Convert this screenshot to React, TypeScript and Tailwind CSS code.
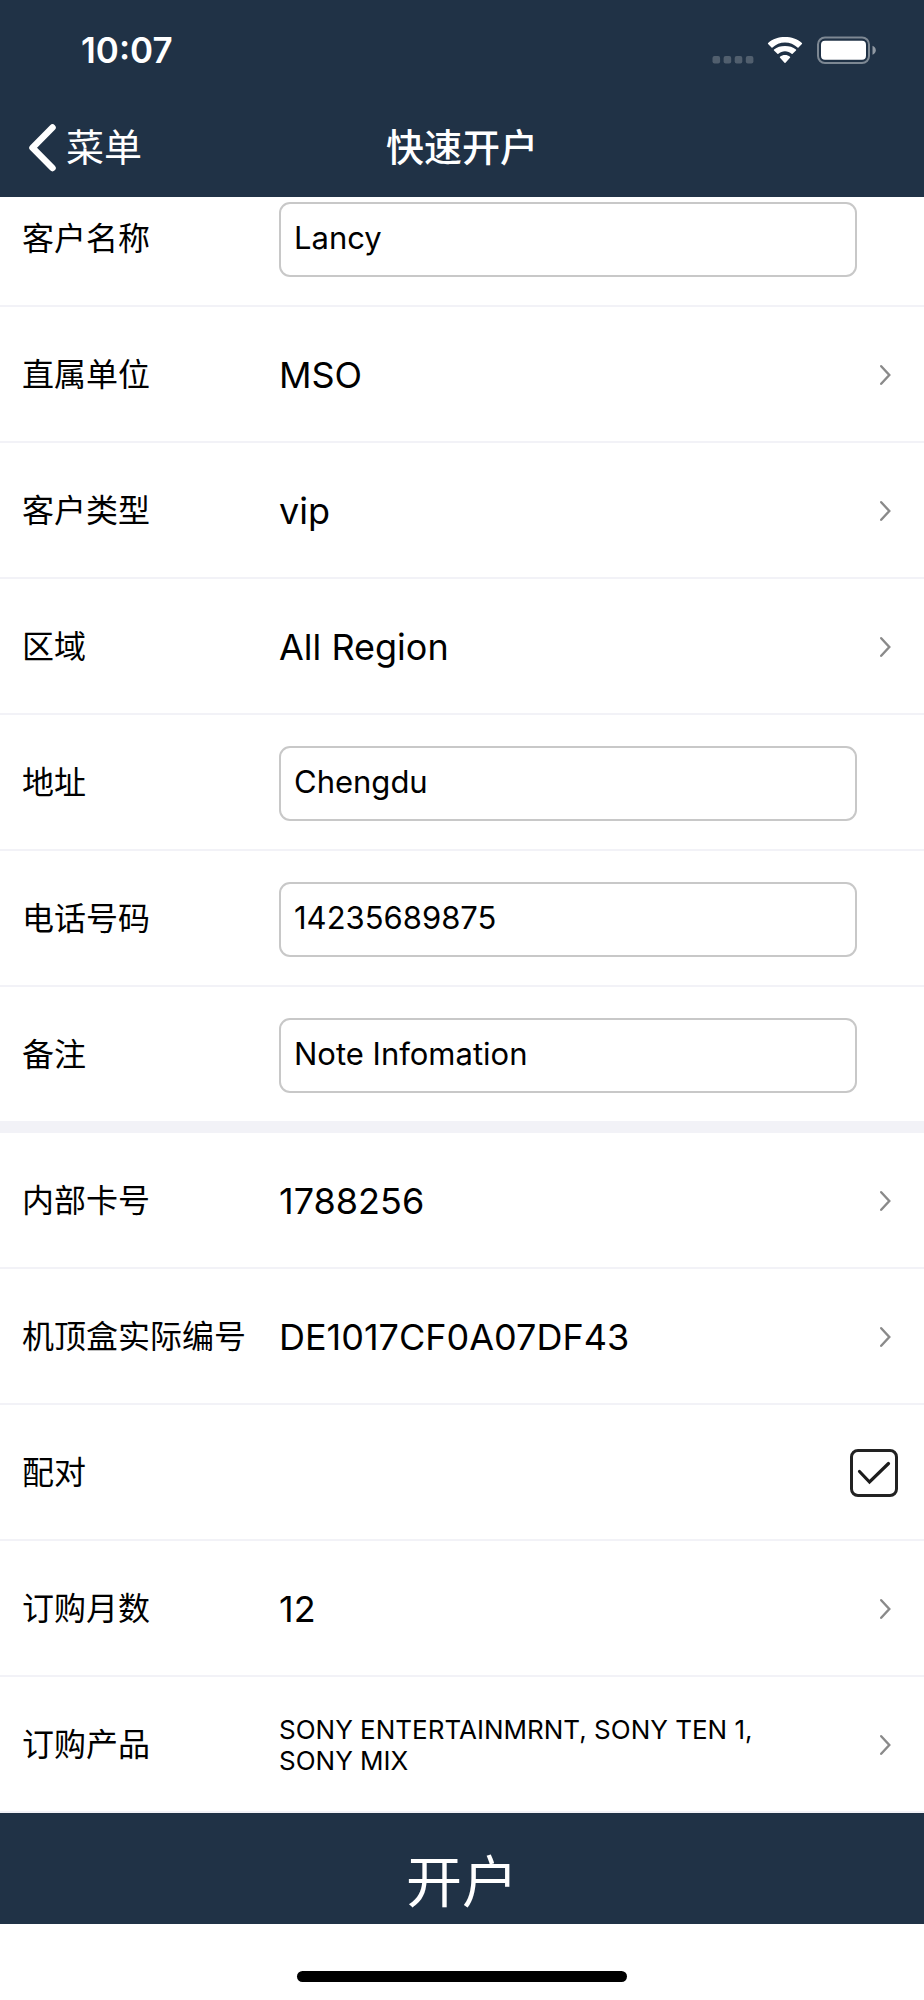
import { useLayoutEffect, useRef, useState } from "react";
import type { ReactNode } from "react";

const labelClass = "w-[257px] shrink-0 text-[32px] leading-[44px] text-left whitespace-nowrap";

function StatusIcons() {
  return (
    <svg width="164" height="28" viewBox="0 0 164 28" fill="none" aria-hidden="true">
      {/* No signal */}
      <g fill="#fff" fillOpacity="0.22">
        <rect x="0.5" y="20" width="7.6" height="7.6" rx="2" />
        <rect x="11.6" y="20" width="7.6" height="7.6" rx="2" />
        <rect x="22.7" y="20" width="7.6" height="7.6" rx="2" />
        <rect x="33.8" y="20" width="7.6" height="7.6" rx="2" />
      </g>
      {/* Wifi */}
      <g transform="translate(55 1)" fill="#fff">
        <path d="M18 5.4c4.8 0 9.2 1.9 12.5 5.1.3.3.7.3 1 0l3.4-3.4c.3-.3.3-.7 0-1C30.3 1.8 24.4 0 18 0S5.7 1.8 1.1 6.1c-.3.3-.3.7 0 1l3.4 3.4c.3.3.7.3 1 0C8.8 7.3 13.2 5.4 18 5.4z" />
        <path d="M18 14.2c2.5 0 4.8.9 6.6 2.5.3.3.7.3 1 0l3.4-3.200c.3-.3.3-.8 0-1.1C26 9.9 22.2 8.900 18 8.900s-8 1-11 3.500c-.3.3-.3.8 0 1.1l3.4 3.200c.3.3.7.3 1 0 1.8-1.6 4.1-2.500 6.600-2.500z" />
        <path d="M23 20.700c.3-.3.3-.7 0-1-1.4-1.1-3.1-1.700-5-1.700s-3.600.6-5 1.700c-.3.3-.3.7 0 1l4.500 5c.3.3.7.3 1 0z" />
      </g>
      {/* Battery */}
      <rect x="106" y="1.5" width="51" height="25.5" rx="7" stroke="#fff" strokeOpacity="0.42" strokeWidth="2" />
      <rect x="109" y="4.800" width="45" height="19" rx="4" fill="#fff" />
      <path d="M160.500 9.800c2 .8 3.300 2.500 3.300 4.500s-1.300 3.700-3.300 4.500z" fill="#fff" fillOpacity="0.5" />
    </svg>
  );
}

function Row({ children }: { children: ReactNode }) {
  return (
    <div className="flex h-[136px] w-full shrink-0 items-center border-b-2 border-[#f2f2f7] bg-white pl-[22px] pr-[26px] pt-[2px]">
      {children}
    </div>
  );
}

function InputRow({ id, label, defaultValue, type = "text" }: { id: string; label: string; defaultValue: string; type?: string }) {
  return (
    <Row>
      <label htmlFor={id} className={labelClass}>
        {label}
      </label>
      <input
        id={id}
        type={type}
        defaultValue={defaultValue}
        className="mr-[41px] h-[75px] min-w-0 flex-1 rounded-[11px] border-2 border-[#c8c8c8] bg-white px-[13px] pb-1 text-[31px] text-black outline-none"
      />
    </Row>
  );
}

function PickerRow({ label, value, small = false }: { label: string; value: string; small?: boolean }) {
  return (
    <button type="button" className="block w-full">
      <Row>
        <span className={labelClass}>{label}</span>
        <span className={`min-w-0 flex-1 pr-20 text-left ${small ? "text-[26px] leading-[31px]" : "text-[36px] leading-[44px]"}`}>
          {value}
        </span>
        <svg width="24" height="24" viewBox="0 0 24 24" fill="none" stroke="#8a8a8a" strokeWidth="2.4" strokeLinecap="round" aria-hidden="true">
          <path d="M7.200 3.200 15.300 12l-8.100 8.800" />
        </svg>
      </Row>
    </button>
  );
}

export default function App() {
  const listRef = useRef<HTMLElement>(null);
  const [paired, setPaired] = useState(true);

  // Start at the end of the form
  useLayoutEffect(() => {
    if (listRef.current) listRef.current.scrollTop = listRef.current.scrollHeight;
  }, []);

  return (
    <div className="flex h-screen flex-col bg-white font-['Inter','Noto_Sans_CJK_SC',sans-serif] text-black">
      <header className="shrink-0 bg-[#203246] text-white">
        <div className="flex h-[100px] items-center justify-between pl-[81px] pr-12">
          <span className="text-[35px] font-semibold leading-[44px]">10:07</span>
          <StatusIcons />
        </div>
        <div className="grid h-[97px] grid-cols-3 items-center px-6 pb-1">
          <button type="button" className="flex items-center gap-1 text-left text-[38px] leading-[44px]">
            <svg width="38" height="50" viewBox="0 0 38 50" fill="none" stroke="#fff" strokeWidth="6.5" strokeLinecap="round" strokeLinejoin="round" aria-hidden="true">
              <path d="M28.5 5.500 8.500 25.800 28.500 46" />
            </svg>
            菜单
          </button>
          <h1 className="text-center text-[38px] font-medium leading-[44px]">快速开户</h1>
        </div>
      </header>

      <main ref={listRef} className="min-h-0 flex-1 overflow-y-auto [scrollbar-width:none]">
        <section>
          <InputRow id="name" label="客户名称" defaultValue="Lancy" />
          <PickerRow label="直属单位" value="MSO" />
          <PickerRow label="客户类型" value="vip" />
          <PickerRow label="区域" value="All Region" />
          <InputRow id="address" label="地址" defaultValue="Chengdu" />
          <InputRow id="phone" label="电话号码" defaultValue="14235689875" type="tel" />
          <InputRow id="note" label="备注" defaultValue="Note Infomation" />
        </section>

        <section className="border-t-[10px] border-[#f2f2f7]">
          <PickerRow label="内部卡号" value="1788256" />
          <PickerRow label="机顶盒实际编号" value="DE1017CF0A07DF43" />
          <Row>
            <label htmlFor="paired" className={labelClass}>
              配对
            </label>
            <div className="relative ml-auto size-12">
              <input
                id="paired"
                type="checkbox"
                checked={paired}
                onChange={(e) => setPaired(e.target.checked)}
                className="peer block size-12 appearance-none rounded-lg border-[3px] border-[#222222] bg-white"
              />
              <svg className="pointer-events-none absolute inset-0 hidden peer-checked:block" viewBox="0 0 48 48" fill="none" stroke="#1c1c1c" strokeWidth="3.2" strokeLinecap="round" aria-hidden="true">
                <path d="M9.500 22.500 19.500 33 38.500 14.500" />
              </svg>
            </div>
          </Row>
          <PickerRow label="订购月数" value="12" />
          <PickerRow label="订购产品" value="SONY ENTERTAINMRNT, SONY TEN 1, SONY MIX" small />
        </section>
      </main>

      <footer className="shrink-0">
        <button type="button" className="flex h-[111px] w-full items-end justify-center bg-[#203246] pb-[6px] text-[56px] leading-[72px] text-white">
          开户
        </button>
        <div className="flex h-[76px] items-end justify-center pb-[18px]">
          <div className="h-[11px] w-[330px] rounded-full bg-black" />
        </div>
      </footer>
    </div>
  );
}
